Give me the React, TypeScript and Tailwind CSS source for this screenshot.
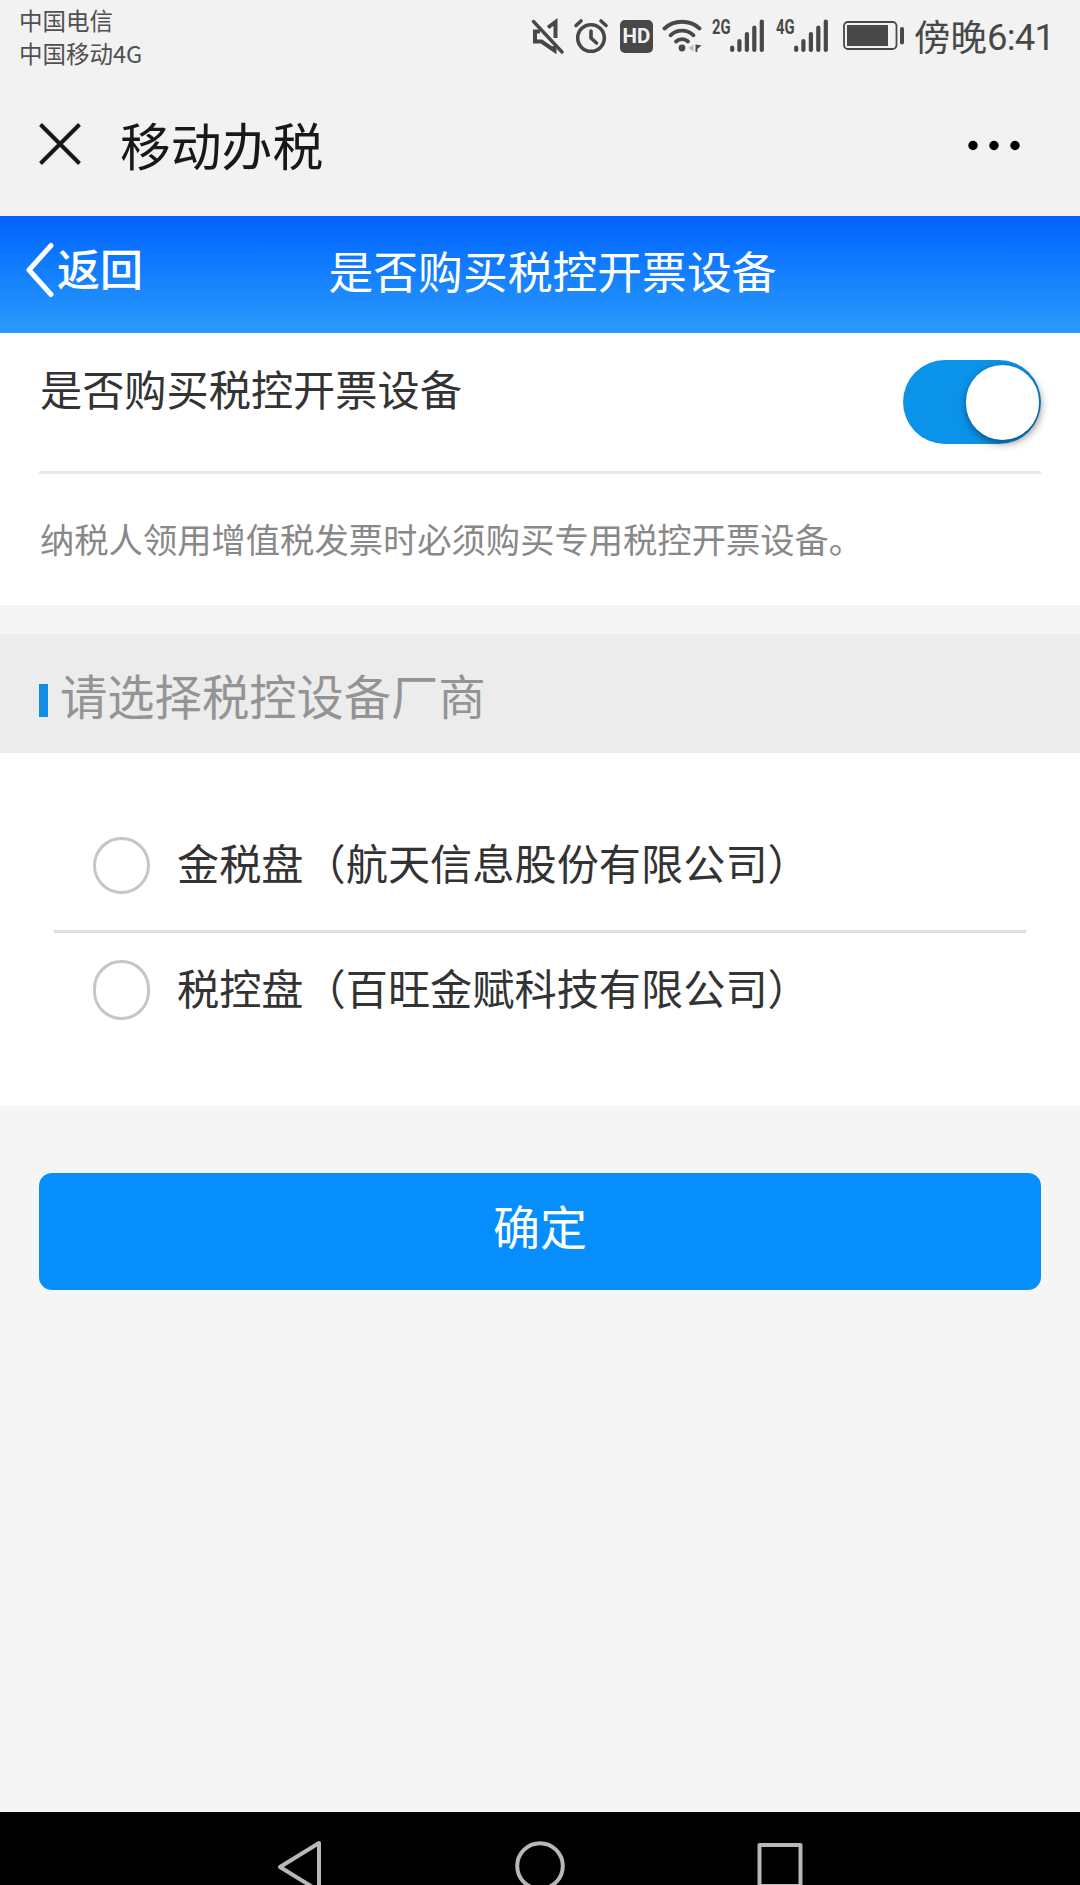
import { useState } from "react";

const OPTIONS = ["金税盘（航天信息股份有限公司）", "税控盘（百旺金赋科技有限公司）"];

function MuteIcon() {
  return (
    <svg className="h-[36px] w-[36px]" viewBox="0 0 36 36" fill="none" stroke="#484848" strokeWidth="4" strokeLinejoin="round" strokeLinecap="round">
      <path d="M3.5 3.5 32 34" strokeWidth="3.4" />
      <path d="M18 9.5 25.5 4V20" strokeLinejoin="miter" strokeLinecap="butt" />
      <path d="M10 13.5H5V23.500H11.500L24.500 32.500V28" strokeLinejoin="miter" strokeLinecap="butt" />
    </svg>
  );
}

function AlarmIcon() {
  return (
    <svg className="h-[36px] w-[36px]" viewBox="0 0 36 36" fill="none" stroke="#484848" strokeLinecap="round" strokeLinejoin="round">
      <circle cx="18" cy="20" r="13.300" strokeWidth="3.600" />
      <path d="M18 13v7l5.500 5" strokeWidth="3.600" />
      <path d="M3 7.500 8 3M28 3l5 4.500" strokeWidth="3.600" />
    </svg>
  );
}

function WifiIcon() {
  return (
    <svg className="h-[36px] w-[40px]" viewBox="0 0 40 36" fill="none" stroke="#484848" strokeWidth="3.800" strokeLinecap="round">
      <path d="M2.500 10.500C12 1.500 28 1.500 37.500 10.500" />
      <path d="M8.500 17.300C15 11 25 11 31.500 17.300" />
      <path d="M14 23.500C17.500 20.300 22.500 20.300 26 23.500" />
      <circle cx="20" cy="30" r="3.400" fill="#484848" stroke="none" />
      <path d="M31.500 26.500v7l-5-3.500z" fill="#bbb" stroke="none" />
      <path d="M33.500 26.500v7.500h1.800v-3l4.200-3.500z" fill="#484848" stroke="none" />
    </svg>
  );
}

function Signal({ label }: { label: string }) {
  return (
    <div className="flex h-[36px] w-[54px]">
      <span className="w-[18px] origin-left scale-x-[0.72] font-[Roboto] text-[20.5px] leading-[18px] font-bold whitespace-nowrap text-[#484848]">
        {label}
      </span>
      <svg className="h-[36px] w-[36px]" viewBox="18 0 36 36" stroke="#484848" strokeWidth="4.200" strokeLinecap="round">
        <path d="M20.200 29.500V32M27.400 23V32M34.900 16V32M42.300 9.500V32M49.800 3.500V32" />
      </svg>
    </div>
  );
}

function BatteryIcon() {
  return (
    <svg className="h-[30px] w-[62px]" viewBox="0 0 62 30">
      <rect x="1" y="1" width="52.500" height="27" rx="4" fill="none" stroke="#484848" strokeWidth="1.800" />
      <rect x="4" y="4" width="41" height="21" fill="#484848" />
      <rect x="57" y="6" width="4" height="17.500" rx="2" fill="#484848" />
    </svg>
  );
}

function StatusBar() {
  return (
    <div className="flex h-[72px] justify-between pr-[25px] pl-[19px] text-[#505050]">
      <div className="pt-[4px] text-[23.5px] leading-[32.5px]">
        <p>中国电信</p>
        <p>中国移动4G</p>
      </div>
      <div className="flex items-start pt-[18px]">
        <MuteIcon />
        <div className="ml-[7px]"><AlarmIcon /></div>
        <div className="mt-[2px] ml-[11px] flex h-[33px] w-[33px] items-center justify-center rounded-[5px] bg-[#484848] font-[Roboto] text-[20.5px] font-bold text-[#f2f2f2]">
          HD
        </div>
        <div className="ml-[9px]"><WifiIcon /></div>
        <div className="ml-[10px]"><Signal label="2G" /></div>
        <div className="ml-[10px]"><Signal label="4G" /></div>
        <div className="mt-[3px] ml-[13px]"><BatteryIcon /></div>
        <span className="ml-[9px] flex w-[141px] leading-[36px] whitespace-nowrap text-[#484848]">
          <span className="text-[36.5px]">傍晚</span>
          <span className="font-[Roboto] text-[36.5px] leading-[39px] tracking-[-0.8px]">6:41</span>
        </span>
      </div>
    </div>
  );
}

export default function App() {
  const [enabled, setEnabled] = useState(true);
  const [selected, setSelected] = useState(-1);

  return (
    <div className="flex h-[1885px] w-[1080px] flex-col overflow-hidden bg-[#f5f5f5] font-['Noto_Sans_CJK_SC',sans-serif] text-[#333]">
      <div className="h-[216px] shrink-0 bg-[#f2f2f2]">
        <StatusBar />
        <div className="flex h-[144px] items-start pr-[59px] pl-[38px]">
          <svg className="mt-[50px] h-[44px] w-[44px]" viewBox="0 0 44 44" stroke="#181818" strokeWidth="4">
            <path d="M2.500 2.500 41.500 41.500M41.500 2.500 2.500 41.500" />
          </svg>
          <h1 className="ml-[38px] text-[50.8px] leading-[145px] text-[#181818]">移动办税</h1>
          <svg className="mt-[68px] ml-auto h-[11px] w-[53px]" viewBox="0 0 53 11">
            <circle cx="5" cy="5.500" r="4.700" />
            <circle cx="26" cy="5.500" r="4.700" />
            <circle cx="47" cy="5.500" r="4.700" />
          </svg>
        </div>
      </div>

      <header className="grid h-[117px] shrink-0 grid-cols-[328.5px_450px_1fr] items-center bg-linear-to-b from-[#0562ff] to-[#2c9afb] pb-2.5 text-white">
        <button className="flex items-center pl-[25px]">
          <svg className="h-[56px] w-[30px]" viewBox="0 0 30 56" fill="none" stroke="white" strokeWidth="5" strokeLinecap="round" strokeLinejoin="round">
            <path d="M26 3.500 4 28 26 52.500" />
          </svg>
          <span className="ml-[2px] pb-[5px] text-[43px] font-medium">返回</span>
        </button>
        <h2 className="text-[44.8px] whitespace-nowrap">是否购买税控开票设备</h2>
      </header>

      <section className="h-[272px] shrink-0 bg-white px-[39px]">
        <div className="flex h-[141px] justify-between border-b-[3px] border-[#e8e8e8]">
          <span className="ml-px text-[42.2px] leading-[109px]">是否购买税控开票设备</span>
          <button
            onClick={() => setEnabled(!enabled)}
            className={`mt-[27px] flex h-[84px] w-[138px] items-center rounded-full px-[2px] ${enabled ? "justify-end bg-[#0b93ea]" : "justify-start bg-[#ccc]"}`}
          >
            <span className="mt-px h-[75px] w-[73px] rounded-full bg-white shadow-[1px_3px_8px_rgba(0,0,0,0.5)]" />
          </button>
        </div>
        <p className="ml-px text-[34.3px] leading-[128px] text-[#888]">纳税人领用增值税发票时必须购买专用税控开票设备。</p>
      </section>

      <div className="mt-[28.5px] flex h-[119.5px] shrink-0 items-center bg-[#ececec] pl-[39px]">
        <span className="mt-[15px] h-[33px] w-[9px] bg-[#138ce4]" />
        <h3 className="mt-[4px] ml-[12px] text-[47.3px] text-[#949494]">请选择税控设备厂商</h3>
      </div>

      <section className="h-[353px] shrink-0 bg-white px-[54px] pt-[48px]">
        {OPTIONS.map((label, i) => (
          <button
            key={label}
            onClick={() => setSelected(i)}
            className={`flex w-full items-center pl-[39px] ${i === 0 ? "h-[132px] border-b-[3px] border-[#e0e0e0]" : "h-[114px]"}`}
          >
            <span className={`flex w-[57px] items-center justify-center rounded-full border-[3px] border-[#c6c6c6] ${i === 0 ? "h-[57px]" : "h-[60px]"}`}>
              {selected === i && <span className="h-[30px] w-[30px] rounded-full bg-[#0b93ea]" />}
            </span>
            <span className={`ml-[27px] text-[42.2px] whitespace-nowrap ${i === 0 ? "pb-[8px]" : "pb-[6px]"}`}>
              {label}
            </span>
          </button>
        ))}
      </section>

      <button className="mx-[39px] mt-[67px] flex h-[117px] shrink-0 items-center justify-center rounded-[13px] bg-[#068efd] pb-[12px] text-[47px] text-white">
        确定
      </button>

      <nav className="mt-auto h-[73px] shrink-0 overflow-hidden bg-black">
        <div className="grid grid-cols-[277px_238px_242px_1fr] pt-[28px]">
          <span />
          <svg className="h-[52px] w-[46px]" viewBox="0 0 46 52" fill="none" stroke="#b8b8b8" strokeWidth="4" strokeLinejoin="round">
            <path d="M42 3 3 27 42 51z" />
          </svg>
          <svg className="h-[52px] w-[50px]" viewBox="0 0 50 52" fill="none" stroke="#b8b8b8" strokeWidth="4">
            <circle cx="25" cy="26" r="22.800" />
          </svg>
          <svg className="h-[52px] w-[46px]" viewBox="0 0 46 52" fill="none" stroke="#b8b8b8" strokeWidth="4" strokeLinejoin="round">
            <rect x="2.500" y="5" width="41" height="41" />
          </svg>
        </div>
      </nav>
    </div>
  );
}
